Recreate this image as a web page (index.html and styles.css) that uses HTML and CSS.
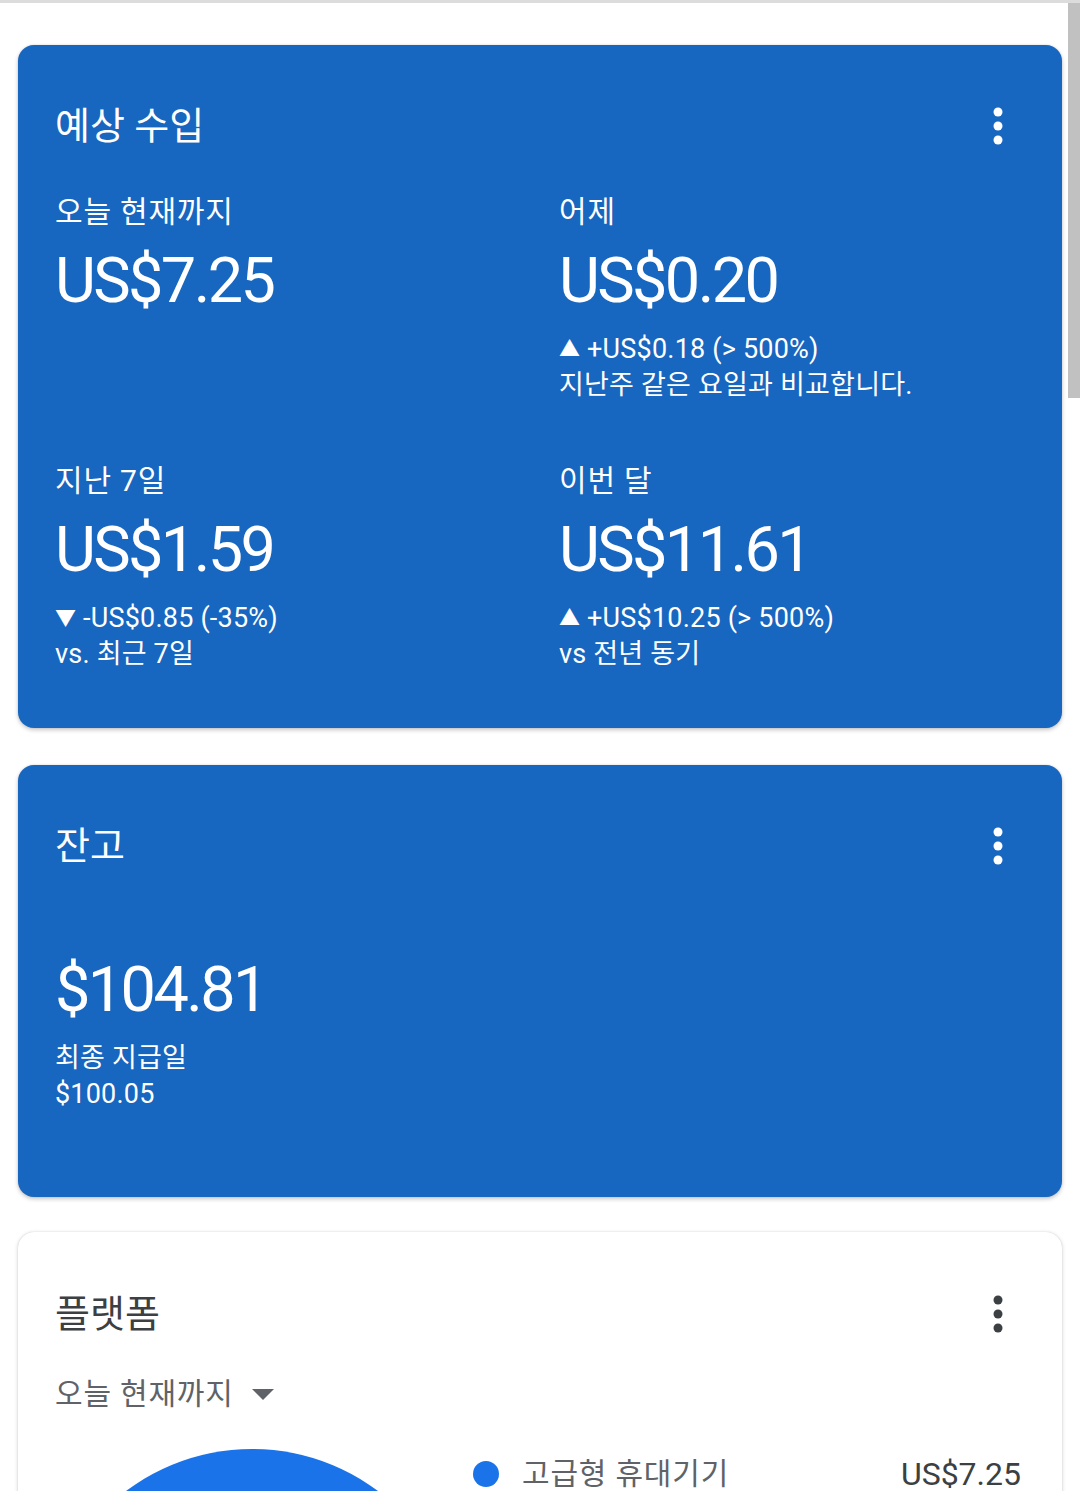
FILE: index.html
```html
<!DOCTYPE html>
<html lang="ko">
<head>
    <meta charset="UTF-8">
    <meta name="viewport" content="width=device-width, initial-scale=1.0">
    <title>AdSense</title>
    <link rel="stylesheet" href="styles.css">
</head>
<body>
    <div class="topline"></div>
    <div class="scroll-thumb"></div>
    <main class="page">
        <!-- 예상 수입 -->
        <section class="card card-blue">
            <div class="card-head">
                <h2 class="card-title">예상 수입</h2>
                <button class="more-btn" aria-label="더보기">
                    <svg width="10" height="38" viewBox="0 0 10 38"><circle cx="5" cy="5" r="4.5"/><circle cx="5" cy="19" r="4.5"/><circle cx="5" cy="33" r="4.5"/></svg>
                </button>
            </div>
            <div class="stats">
                <div class="stat">
                    <div class="stat-label">오늘 현재까지</div>
                    <div class="stat-value">US$7.25</div>
                </div>
                <div class="stat">
                    <div class="stat-label">어제</div>
                    <div class="stat-value">US$0.20</div>
                    <div class="stat-change"><span class="arrow">▲</span> +US$0.18 (&gt; 500%)</div>
                    <div class="stat-change">지난주 같은 요일과 비교합니다.</div>
                </div>
                <div class="stat">
                    <div class="stat-label">지난 7일</div>
                    <div class="stat-value">US$1.59</div>
                    <div class="stat-change"><span class="arrow">▼</span> -US$0.85 (-35%)</div>
                    <div class="stat-change">vs. 최근 7일</div>
                </div>
                <div class="stat">
                    <div class="stat-label">이번 달</div>
                    <div class="stat-value">US$11.61</div>
                    <div class="stat-change"><span class="arrow">▲</span> +US$10.25 (&gt; 500%)</div>
                    <div class="stat-change">vs 전년 동기</div>
                </div>
            </div>
        </section>

        <!-- 잔고 -->
        <section class="card card-blue card-balance">
            <div class="card-head">
                <h2 class="card-title">잔고</h2>
                <button class="more-btn" aria-label="더보기">
                    <svg width="10" height="38" viewBox="0 0 10 38"><circle cx="5" cy="5" r="4.5"/><circle cx="5" cy="19" r="4.5"/><circle cx="5" cy="33" r="4.5"/></svg>
                </button>
            </div>
            <div class="stat-value balance-value">$104.81</div>
            <div class="stat-change">최종 지급일</div>
            <div class="stat-change">$100.05</div>
        </section>

        <!-- 플랫폼 -->
        <section class="card card-white">
            <div class="card-head">
                <h2 class="card-title">플랫폼</h2>
                <button class="more-btn" aria-label="더보기">
                    <svg width="10" height="38" viewBox="0 0 10 38"><circle cx="5" cy="5" r="4.5"/><circle cx="5" cy="19" r="4.5"/><circle cx="5" cy="33" r="4.5"/></svg>
                </button>
            </div>
            <div class="range-select">
                <span>오늘 현재까지</span>
                <svg width="22" height="11" viewBox="0 0 22 11"><path d="M0 0h22L11 11z"/></svg>
            </div>
            <div class="chart-row">
                <div class="chart">
                    <div class="pie"></div>
                </div>
                <div class="legend">
                    <div class="legend-item">
                        <span class="legend-dot"></span>
                        <span class="legend-name">고급형 휴대기기</span>
                        <span class="legend-amount">US$7.25</span>
                    </div>
                </div>
            </div>
        </section>
    </main>
</body>
</html>
```

FILE: styles.css
```css
html, body {
    margin: 0;
    padding: 0;
    height: 100%;
    overflow: hidden;
}
body {
    font-family: Roboto, "Noto Sans CJK KR", sans-serif;
    background-color: #fff;
    color: #fff;
}
.topline {
    height: 3px;
    background-color: #dcdcdc;
}
.scroll-thumb {
    position: fixed;
    top: 3px;
    right: 0;
    width: 12px;
    height: 395px;
    background-color: #c1c1c1;
}
.page {
    padding: 42px 18px 0 18px;
    width: 1044px;
}
.card {
    border-radius: 16px;
    padding: 57px 37px 56px 37px;
    margin-bottom: 37px;
}
.card-blue {
    background-color: #1766c0;
    box-shadow: 0 2px 4px rgba(0, 0, 0, 0.22), 0 0 2px rgba(0, 0, 0, 0.12);
}
.card-white {
    background-color: #fff;
    color: #3c4043;
    box-shadow: 0 1px 4px rgba(0, 0, 0, 0.18), 0 0 1px rgba(0, 0, 0, 0.2);
    padding-top: 58px;
}
.card-head {
    display: flex;
    justify-content: space-between;
    align-items: center;
}
.card-title {
    margin: 0;
    font-size: 38px;
    font-weight: 400;
    line-height: 48px;
}
.more-btn {
    width: 54px;
    height: 48px;
    padding: 0;
    border: none;
    background: none;
    display: flex;
    align-items: center;
    justify-content: center;
    fill: #fff;
}
.card-white .more-btn {
    fill: #3c4043;
}
.stats {
    display: grid;
    grid-template-columns: 1fr 1fr;
    column-gap: 38px;
    row-gap: 60px;
    margin-top: 44px;
}
.stat-label {
    font-size: 30px;
    line-height: 36px;
    letter-spacing: 0.8px;
}
.stat-value {
    font-size: 63px;
    line-height: 76px;
    letter-spacing: -2.6px;
    margin: 13px 0 12px 0;
}
.stat-change {
    font-size: 27px;
    line-height: 36px;
    letter-spacing: 0.2px;
}
.arrow {
    font-size: 21px;
    vertical-align: 2px;
}
.card-balance {
    padding-bottom: 85px;
    margin-bottom: 35px;
}
.balance-value {
    margin-top: 82px;
}
.range-select {
    display: flex;
    align-items: center;
    gap: 18px;
    margin-top: 36px;
    font-size: 30px;
    line-height: 40px;
    letter-spacing: 0.8px;
    color: #5f6368;
    fill: #5f6368;
}
.chart-row {
    display: flex;
    margin-top: 35px;
}
.chart {
    width: 418px;
    flex-shrink: 0;
}
.pie {
    width: 420px;
    height: 420px;
    margin-left: -13px;
    border-radius: 50%;
    background-color: #1a73e8;
}
.legend {
    flex: 1;
    padding-top: 12px;
}
.legend-item {
    display: flex;
    align-items: center;
    font-size: 30px;
    line-height: 26px;
}
.legend-dot {
    width: 26px;
    height: 26px;
    border-radius: 50%;
    background-color: #1a73e8;
    margin-right: 23px;
}
.legend-name {
    flex: 1;
    color: #5f6368;
    letter-spacing: 0.8px;
}
.legend-amount {
    font-size: 32px;
    color: #3c4043;
    margin-right: 4px;
}
```
